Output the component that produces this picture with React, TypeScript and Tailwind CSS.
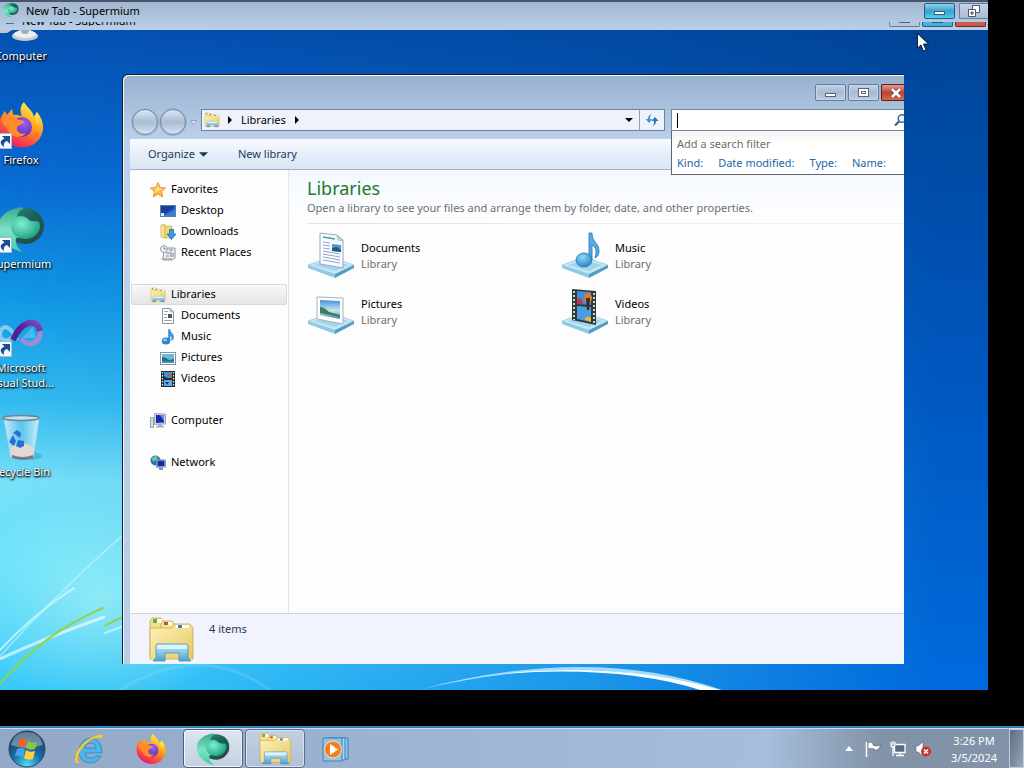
import type { ReactNode } from 'react';

interface IconProps {
  className?: string;
}

function Wallpaper() {
  return (
    <svg className="absolute inset-0 w-full h-full" viewBox="0 0 988 690" preserveAspectRatio="none" aria-hidden="true">
      <defs>
        <linearGradient id="wpLeft" x1="0" y1="0" x2="0" y2="1">
          <stop offset="0.04" stopColor="#0450b2" />
          <stop offset="0.26" stopColor="#086bd2" />
          <stop offset="0.43" stopColor="#1197e4" />
          <stop offset="0.58" stopColor="#32bbef" />
          <stop offset="0.7" stopColor="#7ae1f8" />
          <stop offset="0.82" stopColor="#62e0fb" />
          <stop offset="1" stopColor="#37c8f9" />
        </linearGradient>
        <linearGradient id="wpRight" x1="0" y1="0" x2="0" y2="1">
          <stop offset="0.04" stopColor="#004496" />
          <stop offset="0.5" stopColor="#0055bb" />
          <stop offset="1" stopColor="#006add" />
        </linearGradient>
        <linearGradient id="wpFade" x1="0" y1="0" x2="1" y2="0">
          <stop offset="0" stopColor="#fff" />
          <stop offset="0.15" stopColor="#eee" />
          <stop offset="0.6" stopColor="#777" />
          <stop offset="0.95" stopColor="#000" />
        </linearGradient>
        <mask id="wpMask">
          <rect width="988" height="690" fill="url(#wpFade)" />
        </mask>
        <radialGradient id="wpGlow">
          <stop offset="0" stopColor="#c9fff4" stopOpacity="0.5" />
          <stop offset="1" stopColor="#c9fff4" stopOpacity="0" />
        </radialGradient>
      </defs>
      <rect width="988" height="690" fill="url(#wpRight)" />
      <rect width="988" height="690" fill="url(#wpLeft)" mask="url(#wpMask)" />
      <ellipse cx="100" cy="600" rx="140" ry="110" fill="url(#wpGlow)" />
      <g fill="none" strokeLinecap="round">
        <path d="M0 650 Q36 612 74 588" stroke="#d9fbff" strokeWidth="2" opacity="0.75" />
        <path d="M0 656 Q60 590 124 534" stroke="#c8f6ff" strokeWidth="2" opacity="0.5" />
        <path d="M0 659 Q40 640 104 617" stroke="#fff" strokeWidth="3" opacity="0.6" />
        <path d="M0 684 Q42 634 103 608" stroke="#8fd44a" strokeWidth="2" />
        <path d="M105 626 Q112 621 124 617" stroke="#8fd44a" strokeWidth="2" />
        <path d="M105 633 L124 626" stroke="#e6ffff" strokeWidth="2" opacity="0.6" />
        <path d="M120 690 Q200 640 270 690" stroke="#8fe0ff" strokeWidth="3" opacity="0.25" />
      </g>
      <path d="M418 690 Q590 644 722 690 L704 690 Q590 650 418 690Z" fill="#9fdcff" />
      <path d="M500 674 Q620 661 720 690 L700 690 Q620 665 500 674Z" fill="#fff" />
    </svg>
  );
}

function SupermiumIcon({ className }: IconProps) {
  return (
    <svg className={className} viewBox="0 0 48 48" aria-hidden="true">
      <defs>
        <radialGradient id="smBall" cx="0.35" cy="0.35" r="0.75">
          <stop offset="0" stopColor="#7defcf" />
          <stop offset="0.7" stopColor="#34b596" />
          <stop offset="1" stopColor="#1c8f79" />
        </radialGradient>
        <linearGradient id="smRim" x1="0" y1="0" x2="1" y2="1">
          <stop offset="0" stopColor="#2a8f77" />
          <stop offset="0.5" stopColor="#1c5f56" />
          <stop offset="1" stopColor="#26423f" />
        </linearGradient>
        <linearGradient id="smTail" x1="0" y1="0" x2="0" y2="1">
          <stop offset="0" stopColor="#3ba98c" />
          <stop offset="0.5" stopColor="#7be3c4" />
          <stop offset="1" stopColor="#45c9a6" />
        </linearGradient>
      </defs>
      <ellipse cx="28" cy="21" rx="19" ry="18" fill="url(#smRim)" />
      <path d="M17 4 C6 7 1 15 1 23 C2 35 12 44 26 47 C20 43 18 38 19 33 L24 32 L20 12 C20 8 23 5 27 3 C23 2 20 3 17 4Z" fill="url(#smTail)" />
      <path d="M15 18 C17 10 26 9 31 14 C35 18 39 15 42 17 C46 25 38 34 29 34 C20 34 12 28 15 18Z" fill="url(#smBall)" />
    </svg>
  );
}

function FirefoxIcon({ className }: IconProps) {
  return (
    <svg className={className} viewBox="0 0 48 48" aria-hidden="true">
      <defs>
        <linearGradient id="ffBody" x1="0.8" y1="0.1" x2="0.3" y2="1">
          <stop offset="0" stopColor="#fff04a" />
          <stop offset="0.35" stopColor="#ffa91f" />
          <stop offset="0.65" stopColor="#ff5a36" />
          <stop offset="1" stopColor="#e8176b" />
        </linearGradient>
        <radialGradient id="ffGlobe" cx="0.6" cy="0.3" r="0.8">
          <stop offset="0" stopColor="#a05cf2" />
          <stop offset="1" stopColor="#4b2fb0" />
        </radialGradient>
      </defs>
      <path d="M27 1 C28 5 36 10 37 16 L40 11 C46 18 48 27 44 35 C39 46 24 50 13 43 C1 36 0 22 5 14 L8 10 L10 14 L15 8 L16 14 C20 13 23 15 25 15 C22 9 24 4 27 1Z" fill="url(#ffBody)" />
      <circle cx="25" cy="26" r="10" fill="url(#ffGlobe)" />
      <path d="M5 17 C10 14 16 15 19 18 L27 20 C26 24 21 24 20 26 C19 31 24 34 29 32 C25 38 14 37 11 29 C9 25 5 25 5 17Z" fill="#ff8b2a" />
      <path d="M27 1 C28 7 39 12 40 24 C42 19 41 15 40 11 L37 16 C36 10 30 7 27 1Z" fill="#ffe14a" />
    </svg>
  );
}

function VisualStudioIcon({ className }: IconProps) {
  return (
    <svg className={className} viewBox="0 0 48 48" aria-hidden="true">
      <defs>
        <linearGradient id="vsRing" x1="0" y1="1" x2="1" y2="0">
          <stop offset="0" stopColor="#3f2a8c" />
          <stop offset="0.5" stopColor="#5b1c9b" />
          <stop offset="1" stopColor="#7a4fbd" />
        </linearGradient>
      </defs>
      <path d="M20 31 C12 14 4 16 3 25 C3 32 10 33 16 28" fill="none" stroke="#8bc9f0" strokeWidth="4" />
      <path d="M24 30 Q34 39 41 31 Q44 27 43 22" fill="none" stroke="#9d8ad9" strokeWidth="5" />
      <path d="M16 31 C24 12 40 8 43 22" fill="none" stroke="url(#vsRing)" strokeWidth="6" />
      <path d="M25 29 L36 18 L39 29Z" fill="#6fd2ee" opacity="0.5" />
    </svg>
  );
}

function RecycleBinIcon({ className }: IconProps) {
  return (
    <svg className={className} viewBox="0 0 48 48" aria-hidden="true">
      <defs>
        <linearGradient id="rbGlass" x1="0" y1="0" x2="1" y2="0">
          <stop offset="0" stopColor="#dff6ff" stopOpacity="0.85" />
          <stop offset="0.5" stopColor="#6cc4ea" stopOpacity="0.6" />
          <stop offset="1" stopColor="#e7faff" stopOpacity="0.85" />
        </linearGradient>
      </defs>
      <ellipse cx="32" cy="43" rx="13" ry="4" fill="#1b7ea3" opacity="0.3" />
      <path d="M7 5 L42 5 L36 44 Q26 49 14 44Z" fill="url(#rbGlass)" stroke="#b6dce9" />
      <path d="M13 36 Q19 29 25 32 Q30 28 37 36 L36 44 Q26 49 14 44Z" fill="#e1d9d4" />
      <path d="M15 42 Q26 46 36 42 L36 45 Q26 49 15 45Z" fill="#717a82" />
      <ellipse cx="24" cy="5" rx="18" ry="2.5" fill="#bfe3f0" stroke="#6e8593" strokeWidth="1.500" />
      <path d="M16 20 L20 17 L24 20 L23 25 L19 22Z M12 29 L16 22 L19 28 L17 33Z M19 33 L21 27 L27 28 L27 33 L23 35Z" fill="#2472d4" />
    </svg>
  );
}

function ComputerDesktopIcon({ className }: IconProps) {
  return (
    <svg className={className} viewBox="0 0 48 48" aria-hidden="true">
      <path d="M5 4 H44 V31 H5Z" fill="#2c5fb0" stroke="#c5cbd2" strokeWidth="2" />
      <path d="M22 30 H34 V37 H22Z" fill="#a9afb6" />
      <ellipse cx="28" cy="39" rx="13" ry="5" fill="#c9cdd1" />
      <ellipse cx="28" cy="37" rx="11" ry="4" fill="#eeeff0" />
      <ellipse cx="28" cy="34" rx="4" ry="3" fill="#a7abb0" />
      <path d="M3 32 L15 33 L10 36 L2 36Z" fill="#c3c7cc" />
    </svg>
  );
}

function LibrariesIcon({ className }: IconProps) {
  return (
    <svg className={className} viewBox="0 0 48 48" aria-hidden="true">
      <defs>
        <linearGradient id="libFolder" x1="0" y1="0" x2="1" y2="1">
          <stop offset="0" stopColor="#fdf3b8" />
          <stop offset="1" stopColor="#e6c865" />
        </linearGradient>
        <linearGradient id="libStand" x1="0" y1="0" x2="0" y2="1">
          <stop offset="0" stopColor="#c3ecfb" />
          <stop offset="1" stopColor="#4b9fd4" />
        </linearGradient>
      </defs>
      <path d="M3 5 L5 2 H14 L16 6 H26 V40 H3Z" fill="#f6e08a" stroke="#c9a654" strokeWidth="0.8" />
      <rect x="6" y="3" width="9" height="4" fill="#fffef4" />
      <rect x="6" y="3" width="4" height="4" fill="#5fae45" />
      <path d="M14 8 L16 5 H25 L28 9 H38 V42 H14Z" fill="#f7e596" stroke="#c9a654" strokeWidth="0.8" />
      <rect x="17" y="6" width="8" height="3" fill="#fffef4" />
      <rect x="17" y="6" width="4" height="3" fill="#c9562d" />
      <path d="M3 12 H25 L27 8 H43 L46 12 V43 H3Z" fill="url(#libFolder)" stroke="#c9a654" strokeWidth="0.8" />
      <rect x="29" y="9" width="13" height="3" fill="#fff" />
      <rect x="31" y="9" width="4" height="3" fill="#3f7fc4" />
      <path d="M10 28 H39 Q41 28 41 31 V42 L44 45 H32 V37 H18 V45 H6 L9 42 V31 Q9 28 10 28Z" fill="url(#libStand)" stroke="#4c93bd" strokeWidth="0.8" />
      <path d="M10 29 H40 V33 H10Z" fill="#e6f9ff" opacity="0.8" />
    </svg>
  );
}

function Pedestal() {
  return (
    <g>
      <path d="M1 33 L24 25 L47 33 L28 43 Z" fill="#c5e6f5" stroke="#8cc0dc" strokeWidth="0.600" />
      <path d="M1 33 L28 42 L28 46 L1 36Z" fill="#8fc9e6" />
      <path d="M28 42 L47 33 L47 36 L28 46Z" fill="#4f9fc4" />
      <path d="M7 33 L24 28 L41 33 L28 39Z" fill="#a2d4ec" />
    </g>
  );
}

function DocumentsLibraryIcon({ className }: IconProps) {
  return (
    <svg className={className} viewBox="0 0 48 48" aria-hidden="true">
      <Pedestal />
      <path d="M13 1 L30 3 L36 8 V36 L13 32Z" fill="#f7faff" stroke="#9aa5bb" />
      <path d="M30 3 L31 8 L36 9Z" fill="#bfe0dc" stroke="#86a9ab" strokeWidth="0.600" />
      <path d="M16 5 L28 7" stroke="#4fa08f" strokeWidth="1.500" />
      <path d="M16 10 L23 11 M16 13 L23 14 M16 16 L23 17 M16 19 L33 22 M16 22 L33 25 M16 25 L33 28 M16 28 L33 31" stroke="#9aa3cf" strokeWidth="1" />
      <path d="M25 12 L34 13 V20 L25 19Z" fill="#4d9ac7" />
      <path d="M25 16 L30 15 L34 18 V20 L25 19Z" fill="#23587c" />
    </svg>
  );
}

function MusicLibraryIcon({ className }: IconProps) {
  return (
    <svg className={className} viewBox="0 0 48 48" aria-hidden="true">
      <defs>
        <radialGradient id="noteBall" cx="0.4" cy="0.3" r="0.8">
          <stop offset="0" stopColor="#8fd6fb" />
          <stop offset="1" stopColor="#1f7cc4" />
        </radialGradient>
      </defs>
      <Pedestal />
      <path d="M28 1 L31 1 C31 10 38 11 38 19 C38 23 36 25 34 26 C36 19 35 15 31 13 V28 H28Z" fill="#54aee6" stroke="#2674ac" strokeWidth="0.800" />
      <ellipse cx="23" cy="28" rx="8" ry="7" fill="url(#noteBall)" stroke="#2674ac" strokeWidth="0.800" />
    </svg>
  );
}

function PicturesLibraryIcon({ className }: IconProps) {
  return (
    <svg className={className} viewBox="0 0 48 48" aria-hidden="true">
      <defs>
        <linearGradient id="picSky" x1="0" y1="0" x2="0" y2="1">
          <stop offset="0" stopColor="#4690d8" />
          <stop offset="0.55" stopColor="#c6e6f3" />
          <stop offset="1" stopColor="#3d8aa5" />
        </linearGradient>
      </defs>
      <Pedestal />
      <path d="M10 9 L36 10 V36 L10 31Z" fill="#fff" stroke="#a6b2c0" />
      <path d="M13 12 L33 13 V31 L13 27Z" fill="url(#picSky)" />
      <path d="M13 19 Q17 19 22 24 L33 27 V29 L13 25Z" fill="#3e7d5b" />
    </svg>
  );
}

function VideosLibraryIcon({ className }: IconProps) {
  return (
    <svg className={className} viewBox="0 0 48 48" aria-hidden="true">
      <Pedestal />
      <path d="M11 1 L35 3 V37 L11 32Z" fill="#33363c" />
      <path d="M16 3 L30 4 V17 L16 16Z" fill="#3d8fdc" />
      <path d="M16 18 L30 19 V34 L16 31Z" fill="#4a9be2" />
      <path d="M13 3 V32" stroke="#b9e0c7" strokeWidth="2" strokeDasharray="2 2" />
      <path d="M33 5 V35" stroke="#b9e0c7" strokeWidth="2" strokeDasharray="2 2" />
      <path d="M16 11 L20 10 L22 16 L16 16Z" fill="#c8334a" />
      <ellipse cx="27" cy="10" rx="4" ry="5" fill="#d97f2b" />
      <path d="M25 10 H29 L28 22 H26Z" fill="#3a2a20" />
      <path d="M24 30 Q28 27 30 30 V34 L24 32Z" fill="#f0b829" />
    </svg>
  );
}

function StarIcon() {
  return (
    <svg className="size-4" viewBox="0 0 16 16" aria-hidden="true">
      <path d="M8 0.5 L10.2 5.5 L15.6 6 L11.5 9.6 L12.8 15 L8 12 L3.2 15 L4.5 9.6 L0.4 6 L5.8 5.5Z" fill="#fdb93c" stroke="#d9882b" strokeWidth="0.8" />
      <path d="M8 2.5 L9.4 6.4 L13 6.8 L8.500 9 L4 11 L6 8 L3 6.8 L6.600 6.400Z" fill="#ffe08a" />
    </svg>
  );
}

function DesktopSmallIcon() {
  return (
    <svg className="size-4" viewBox="0 0 16 16" aria-hidden="true">
      <rect x="0.5" y="2.5" width="15" height="11" fill="#1f52b8" stroke="#5a7fb5" />
      <path d="M1 12 Q8 9 15 3 V3 H1Z" fill="#163f97" />
      <path d="M4 12 Q10 10 15 6 V13 H4Z" fill="#4a8fe0" opacity="0.7" />
      <rect x="1" y="10" width="3" height="3" fill="#dfe9f5" />
    </svg>
  );
}

function DownloadsSmallIcon() {
  return (
    <svg className="size-4" viewBox="0 0 16 16" aria-hidden="true">
      <path d="M1 1 L5 0.5 V14 L1 13Z" fill="#f6e49a" stroke="#cfae52" strokeWidth="0.8" />
      <path d="M5 2 H12 V14 H5Z" fill="#f1d777" stroke="#cfae52" strokeWidth="0.8" />
      <path d="M9.5 5.5 H13.5 V10 H16 L11.5 15.5 L7 10 H9.5Z" fill="#3a9be0" stroke="#1d6ca8" strokeWidth="0.8" />
    </svg>
  );
}

function RecentSmallIcon() {
  return (
    <svg className="size-4" viewBox="0 0 16 16" aria-hidden="true">
      <path d="M4 3 H15 V13 L12 15 H3Z" fill="#eef1f4" stroke="#8e979f" />
      <circle cx="4" cy="4" r="3.4" fill="#f4f6f8" stroke="#8e979f" />
      <path d="M4 2 V4 H6 M9 5 H13 M6 8 H12 M6 11 H9 M11 9 V12 M13 8 V12" stroke="#75808a" fill="none" />
      <path d="M1 13 H12 V15 H2Z" fill="#aeb6bd" />
    </svg>
  );
}

function DocumentSmallIcon() {
  return (
    <svg className="size-4" viewBox="0 0 16 16" aria-hidden="true">
      <path d="M2.5 0.5 H10 L13.5 4 V15.5 H2.5Z" fill="#fff" stroke="#8b949d" />
      <path d="M10 0.5 V4 H13.5Z" fill="#d5dbe0" stroke="#8b949d" strokeWidth="0.6" />
      <path d="M4 3.5 H8 M4 6.5 H7 M4 9.5 H7 M4 12.5 H12" stroke="#98a2b5" />
      <rect x="8" y="6" width="4" height="4" fill="#4a5862" />
    </svg>
  );
}

function MusicSmallIcon() {
  return (
    <svg className="size-4" viewBox="0 0 16 16" aria-hidden="true">
      <path d="M8.500 0.500 H10 C10 4 14 4.500 13.500 8.500 C13.400 10 12.500 11 11.500 11.500 C12.500 8 11.500 7 10 6.500 V12 H8.500Z" fill="#3d9ade" stroke="#2470ab" strokeWidth="0.500" />
      <ellipse cx="6" cy="12" rx="4.200" ry="3.500" fill="#2f85cf" />
      <ellipse cx="5.200" cy="11" rx="2" ry="1.300" fill="#8ccbf5" />
    </svg>
  );
}

function PictureSmallIcon() {
  return (
    <svg className="size-4" viewBox="0 0 16 16" aria-hidden="true">
      <rect x="0.500" y="2.500" width="15" height="12" fill="#fff" stroke="#8593a0" />
      <rect x="2" y="4" width="12" height="9" fill="#69b9e3" />
      <path d="M2 7 Q6 7 9 10 L14 9 V13 H2Z" fill="#237079" />
      <path d="M2 11 H14 V13 H2Z" fill="#3c93b4" />
    </svg>
  );
}

function VideoSmallIcon() {
  return (
    <svg className="size-4" viewBox="0 0 16 16" aria-hidden="true">
      <rect x="1" y="0" width="14" height="16" fill="#262b33" />
      <rect x="4" y="1" width="8" height="6" fill="#3f95dc" />
      <rect x="4" y="9" width="8" height="6" fill="#58aee8" />
      <path d="M2.500 1 V16 M13.500 1 V16" stroke="#dfe7ee" strokeWidth="1.200" strokeDasharray="1.500 1.500" />
      <path d="M8 3 H12 V6 H9Z" fill="#d0503a" />
      <path d="M4 5 L8 7 H4Z M5 11 H9 L7 14Z" fill="#1d3f6b" />
    </svg>
  );
}

function ComputerSmallIcon() {
  return (
    <svg className="size-4" viewBox="0 0 16 16" aria-hidden="true">
      <path d="M0.500 4.500 H3.500 V14.500 H0.500Z" fill="#d6dade" stroke="#9aa2aa" />
      <path d="M4.500 0.500 L15.500 1 V11 L4.500 11.500Z" fill="#ccd3dc" stroke="#8f99a5" strokeWidth="0.800" />
      <path d="M6 2 L14 2.200 V9.500 L6 10Z" fill="#1428b8" />
      <path d="M10 2 L14 2.200 V8Z" fill="#6e8df0" />
      <path d="M8 11.500 H12 V13 H14 V14.500 H6 V13 H8Z" fill="#a7afb8" />
    </svg>
  );
}

function NetworkSmallIcon() {
  return (
    <svg className="size-4" viewBox="0 0 16 16" aria-hidden="true">
      <circle cx="5.500" cy="5.500" r="5" fill="#2475b8" />
      <path d="M2 3 Q5 0 8 2 L6 5 L3 7Z" fill="#6fd07a" />
      <path d="M6.500 4.500 L15.500 5 V12 L6.500 12.500Z" fill="#c6cfd9" stroke="#7d8996" strokeWidth="0.800" />
      <path d="M7.500 5.500 L14.500 5.700 V11 L7.500 11.500Z" fill="#1428b8" />
      <path d="M9 12.500 H13 V15 H9Z" fill="#8e98a4" />
    </svg>
  );
}

const desktopIcons = [
  { label: 'Computer', icon: <ComputerDesktopIcon className="size-12" />, shortcut: false },
  { label: 'Firefox', icon: <FirefoxIcon className="size-12" />, shortcut: true },
  { label: 'Supermium', icon: <SupermiumIcon className="size-12" />, shortcut: true },
  { label: 'Microsoft Visual Stud...', icon: <VisualStudioIcon className="size-12" />, shortcut: true },
  { label: 'Recycle Bin', icon: <RecycleBinIcon className="size-12" />, shortcut: false },
];

const treeGroups = [
  {
    label: 'Favorites',
    icon: <StarIcon />,
    selected: false,
    children: [
      { label: 'Desktop', icon: <DesktopSmallIcon /> },
      { label: 'Downloads', icon: <DownloadsSmallIcon /> },
      { label: 'Recent Places', icon: <RecentSmallIcon /> },
    ],
  },
  {
    label: 'Libraries',
    icon: <LibrariesIcon className="size-4" />,
    selected: true,
    children: [
      { label: 'Documents', icon: <DocumentSmallIcon /> },
      { label: 'Music', icon: <MusicSmallIcon /> },
      { label: 'Pictures', icon: <PictureSmallIcon /> },
      { label: 'Videos', icon: <VideoSmallIcon /> },
    ],
  },
  { label: 'Computer', icon: <ComputerSmallIcon />, selected: false, children: [] },
  { label: 'Network', icon: <NetworkSmallIcon />, selected: false, children: [] },
];

const libraries = [
  { name: 'Documents', icon: <DocumentsLibraryIcon className="size-12" /> },
  { name: 'Music', icon: <MusicLibraryIcon className="size-12" /> },
  { name: 'Pictures', icon: <PicturesLibraryIcon className="size-12" /> },
  { name: 'Videos', icon: <VideosLibraryIcon className="size-12" /> },
];

const searchFilters = ['Kind:', 'Date modified:', 'Type:', 'Name:'];

function ShortcutArrow() {
  return (
    <svg className="size-4" viewBox="0 0 16 16" aria-hidden="true">
      <rect x="0.5" y="0.5" width="15" height="15" fill="#f2f7fc" stroke="#a9bccf" />
      <path d="M6 3 H14 V11 L11 8 Q7 9 8 14 Q1 9 8.500 5.500Z" fill="#1e4c94" />
    </svg>
  );
}

function DesktopIcons() {
  return (
    <div className="absolute -left-4 -top-[3px] w-[74px] flex flex-col">
      {desktopIcons.map((item) => (
        <button key={item.label} className="relative h-[104px] flex flex-col items-center gap-[3px] text-white">
          {item.icon}
          {item.shortcut && (
            <span className="absolute left-3 top-8">
              <ShortcutArrow />
            </span>
          )}
          <span className="text-[11px] leading-[15px] [text-shadow:1px_1px_2px_#000,0_1px_2px_#000]">
            {item.label}
          </span>
        </button>
      ))}
    </div>
  );
}

function TitleBar() {
  return (
    <header className="relative z-10 h-[30px] overflow-hidden border-t-2 border-[#48566c] bg-linear-to-b from-[#a3b6d0] to-[#b9cfe8] text-black">
      <div className="flex justify-between h-5">
        <div className="flex items-start gap-[7px] pl-[3px] text-[11px] leading-[18px]">
          <SupermiumIcon className="size-4" />
          <h1>New Tab - Supermium</h1>
        </div>
        <div className="flex gap-1 pt-px">
          <button aria-label="Minimize" className="w-[31px] h-4 rounded-xs border border-[#2a5b85] bg-linear-to-b from-[#8fd3ee] via-[#3a9fd0] to-[#4fd0f0] flex items-end justify-center pb-[3px]">
            <span className="w-[11px] h-1 border border-[#35617f] bg-white" />
          </button>
          <button aria-label="Restore" className="w-[29px] h-4 rounded-l-xs border border-r-0 border-[#6b7c96] bg-linear-to-b from-[#c5d2e4] to-[#a9bbd4] flex items-center justify-center">
            <svg className="size-3" viewBox="0 0 12 12" aria-hidden="true">
              <path d="M4.500 0.500 H11.500 V7.500 H4.500Z" fill="#fff" stroke="#4d5870" />
              <path d="M0.500 4.500 H7.500 V11.500 H0.500Z" fill="#fff" stroke="#4d5870" />
              <path d="M3 7 H5 V9 H3Z" fill="#8896ad" stroke="#4d5870" />
            </svg>
          </button>
        </div>
      </div>
      {/* trail left behind by the moving window */}
      <div className="flex items-start justify-between h-[5px]" aria-hidden="true">
        <div className="flex items-start gap-2 pl-[6px]">
          <span className="mt-px w-2 h-px bg-[#50766f]" />
          <span className="h-1 flex items-end overflow-hidden text-[11px] leading-[10px]">
            New Tab - Supermium
          </span>
        </div>
        <div className="flex gap-[2px] pr-[2px]">
          <span className="w-[31px] h-[5px] rounded-b-xs border border-t-0 border-[#6b7c96] bg-[#b4c6dd] flex justify-center">
            <span className="w-[11px] h-px bg-[#56647c]" />
          </span>
          <span className="w-[31px] h-[5px] rounded-b-xs border border-t-0 border-[#2a5b85] bg-[#3fb4dc] flex justify-center">
            <span className="w-[11px] h-px bg-[#2a5b85]" />
          </span>
          <span className="w-[31px] h-[5px] rounded-b-xs border border-t-0 border-[#6a2a2a] bg-[#cc5a4a]" />
        </div>
      </div>
    </header>
  );
}

function WindowControls() {
  return (
    <div className="flex justify-end gap-[2px] pt-2">
      <button aria-label="Minimize" className="w-[31px] h-[17px] rounded-xs border border-[#6b7c96] bg-linear-to-b from-[#c3d1e4] via-[#a7bbd6] to-[#bccde2] shadow-[inset_0_0_0_1px_#c9d6e7] flex items-end justify-center pb-[3px]">
        <span className="w-[11px] h-1 border border-[#56647c] bg-white" />
      </button>
      <button aria-label="Maximize" className="w-[31px] h-[17px] rounded-xs border border-[#6b7c96] bg-linear-to-b from-[#c3d1e4] via-[#a7bbd6] to-[#bccde2] shadow-[inset_0_0_0_1px_#c9d6e7] flex items-center justify-center">
        <span className="w-[11px] h-[9px] border border-[#56647c] bg-white flex items-center justify-center">
          <span className="w-[5px] h-[3px] border border-[#56647c]" />
        </span>
      </button>
      <button aria-label="Close" className="w-[23px] h-[17px] rounded-l-xs border border-r-0 border-[#5e1f22] bg-linear-to-b from-[#e39a8c] via-[#c2402c] to-[#d86a4d] flex items-center justify-end pr-[2px]">
        <svg className="w-3 h-[10px]" viewBox="0 0 12 10" aria-hidden="true">
          <path d="M2 1 L10 9 M10 1 L2 9" stroke="#5b4a55" strokeWidth="4" />
          <path d="M2 1 L10 9 M10 1 L2 9" stroke="#fff" strokeWidth="2.500" />
        </svg>
      </button>
    </div>
  );
}

function BackForward() {
  return (
    <div className="flex items-start w-[71px] pl-[2px]">
      <button aria-label="Back" className="size-[26px] rounded-full border border-[#71839c] bg-linear-to-b from-[#dde7f2] via-[#a9bdd6] to-[#d5e3f3] shadow-[0_0_0_1px_#a4b6cd]" />
      <button aria-label="Forward" className="ml-[2px] size-[26px] rounded-full border border-[#71839c] bg-linear-to-b from-[#dde7f2] via-[#a9bdd6] to-[#d5e3f3] shadow-[0_0_0_1px_#a4b6cd]" />
      <button aria-label="Recent pages" className="ml-1 mt-[11px]">
        <svg className="w-[7px] h-[6px]" viewBox="0 0 7 6" aria-hidden="true">
          <path d="M0.500 0.500 H6.500 L3.500 5Z" fill="#dbe8f6" stroke="#8ea5c2" />
        </svg>
      </button>
    </div>
  );
}

function Triangle({ className }: IconProps) {
  return (
    <svg className={className} viewBox="0 0 8 8" aria-hidden="true">
      <path d="M2 0 L6 4 L2 8Z" fill="currentColor" />
    </svg>
  );
}

function AddressBar() {
  return (
    <div className="flex flex-1 h-[22px] border border-[#6f839e] bg-[#eef3fb]">
      <div className="flex flex-1 items-center pl-[2px]">
        <LibrariesIcon className="size-4" />
        <Triangle className="ml-[6px] size-2" />
        <button className="ml-[7px] text-[11px] leading-5">Libraries</button>
        <Triangle className="ml-[7px] size-2" />
      </div>
      <button aria-label="Previous locations" className="w-5 flex items-center justify-center">
        <Triangle className="size-2 rotate-90" />
      </button>
      <button aria-label="Refresh" className="w-[25px] border-l border-[#8fa0b8] flex items-center justify-center">
        <svg className="size-[14px]" viewBox="0 0 14 14" aria-hidden="true">
          <path d="M6.500 1 Q3 2 3 6 L0.500 6 L4 10 L7.500 6 H5 Q4.500 3 6.500 1Z" fill="#4d93cf" />
          <path d="M7.500 13 Q11 12 11 8 L13.500 8 L10 4 L6.500 8 H9 Q9.500 11 7.500 13Z" fill="#2f73b5" />
        </svg>
      </button>
    </div>
  );
}

function SearchBox() {
  return (
    <div className="relative w-[233px]">
      <div className="flex items-center h-[22px] pl-[5px] border border-r-0 border-[#6f839e] bg-white">
        <label htmlFor="library-search" className="sr-only">
          Search Libraries
        </label>
        <span className="w-px h-[15px] bg-black" />
        <input id="library-search" type="text" className="flex-1 min-w-0 h-5 text-[11px] outline-none" />
        <svg className="w-[10px] h-3" viewBox="0 0 10 12" aria-hidden="true">
          <circle cx="8" cy="4.500" r="3.800" fill="#e9f3fb" stroke="#4a7396" strokeWidth="1.600" />
          <path d="M5 7.500 L1 11.500" stroke="#2f5878" strokeWidth="2" />
        </svg>
      </div>
      <div className="absolute z-10 left-0 right-0 top-[22px] h-11 border-l border-b border-[#5f666f] bg-linear-to-b from-[#f3f3f3] to-white to-30% pl-[5px] pt-1 text-[11px]">
        <p className="leading-[18px] text-[#6d6d6d]">Add a search filter</p>
        <div className="flex gap-[15px] leading-5 text-[#1b66a8]">
          {searchFilters.map((filter) => (
            <button key={filter}>{filter}</button>
          ))}
        </div>
      </div>
    </div>
  );
}

interface TreeRowProps {
  label: string;
  icon: ReactNode;
  nested?: boolean;
  selected?: boolean;
}

function TreeRow({ label, icon, nested, selected }: TreeRowProps) {
  return (
    <button
      className={`flex items-center gap-[5px] h-[21px] rounded-xs border text-left ${nested ? 'pl-7' : 'pl-[18px]'} ${
        selected ? 'border-[#d9d9d9] bg-linear-to-b from-[#f8f8f8] to-[#e5e5e5]' : 'border-transparent'
      }`}
    >
      {icon}
      <span>{label}</span>
    </button>
  );
}

function NavigationPane() {
  return (
    <nav className="w-[159px] shrink-0 flex flex-col gap-[21px] border-r border-[#dfe8f2] px-px pt-[9px] text-[11px]">
      {treeGroups.map((group) => (
        <div key={group.label} className="flex flex-col">
          <TreeRow label={group.label} icon={group.icon} selected={group.selected} />
          {group.children.map((child) => (
            <TreeRow key={child.label} label={child.label} icon={child.icon} nested />
          ))}
        </div>
      ))}
    </nav>
  );
}

function LibraryPane() {
  return (
    <main className="flex-1 min-w-0 pl-[18px] pt-2 bg-linear-to-b from-[#f3f8fe] to-[#fdfdfd] to-10%">
      <h2 className="text-[18px] leading-5 text-[#1d7a2b]">Libraries</h2>
      <p className="mt-[2px] text-[11px] leading-[15px] text-[#6a707a]">
        Open a library to see your files and arrange them by folder, date, and other properties.
      </p>
      <div className="my-2 h-px bg-linear-to-r from-[#dfe5ec] to-[#f0f3f6]" />
      <div className="grid grid-cols-[repeat(auto-fill,254px)] gap-y-2">
        {libraries.map((library) => (
          <button key={library.name} className="flex items-center gap-[6px] h-12 text-left text-[11px] leading-4">
            {library.icon}
            <span className="flex flex-col">
              <span>{library.name}</span>
              <span className="text-[#6d6d6d]">Library</span>
            </span>
          </button>
        ))}
      </div>
    </main>
  );
}

function ExplorerWindow() {
  return (
    <section
      aria-label="Libraries"
      className="absolute left-[122px] right-[84px] top-[74px] bottom-[26px] flex flex-col overflow-hidden rounded-tl-md border-l border-t border-[#14202e] bg-linear-to-b from-[#bdd2ea] to-[#b9cde6] text-black"
    >
      <div className="flex flex-col flex-1 min-h-0 rounded-tl-md border-l border-t border-[#eef6fd]">
        <div className="rounded-tl-md bg-linear-to-b from-[#99b2d0] to-[#bbd1ea]">
          <WindowControls />
          <div className="flex items-start pl-[6px] pt-2 pb-1">
            <BackForward />
            <div className="flex flex-1 gap-[6px]">
              <AddressBar />
              <SearchBox />
            </div>
          </div>
        </div>
        <div className="flex flex-col flex-1 min-h-0 ml-[6px] bg-[#fdfdfd]">
          <div className="flex items-center h-[31px] gap-[30px] pl-[18px] border-b border-[#a3b3ca] bg-linear-to-b from-[#fafcff] via-[#e5eef9] via-50% to-[#dae6f4] text-[11px] text-[#1e395b]">
            <button className="flex items-center gap-1">
              Organize
              <Triangle className="size-[9px] rotate-90" />
            </button>
            <button>New library</button>
          </div>
          <div className="flex flex-1 min-h-0">
            <NavigationPane />
            <LibraryPane />
          </div>
          <footer className="flex h-[51px] shrink-0 gap-[14px] border-t border-[#ccd5e2] bg-[#f1f4fc] pl-[17px] pt-[2px] text-[11px] text-[#1e395b]">
            <LibrariesIcon className="size-12" />
            <p className="pt-1 leading-[18px]">4 items</p>
          </footer>
        </div>
      </div>
    </section>
  );
}

function StartOrb() {
  return (
    <svg className="size-10" viewBox="0 0 40 40" aria-hidden="true">
      <defs>
        <radialGradient id="orb" cx="0.5" cy="0.95" r="0.9">
          <stop offset="0" stopColor="#4fe0f5" />
          <stop offset="0.45" stopColor="#1c6ea8" />
          <stop offset="1" stopColor="#14395f" />
        </radialGradient>
      </defs>
      <circle cx="20" cy="20" r="18" fill="url(#orb)" stroke="#2a4866" />
      <path d="M4 16 Q20 22 36 16 Q33 3 20 3 Q7 3 4 16Z" fill="#fff" opacity="0.350" />
      <path d="M13 10 Q17 8 20 11 L18 19 Q15 16 10 18Z" fill="#f2622e" />
      <path d="M21 12 Q25 15 30 13 L28 20 Q23 22 19 19Z" fill="#8cc63f" />
      <path d="M10 20 Q15 18 18 20 L16 29 Q13 26 8 27Z" fill="#42a5e8" />
      <path d="M19 21 Q23 24 28 22 L26 30 Q21 32 17 29Z" fill="#ffd23c" />
    </svg>
  );
}

function InternetExplorerIcon() {
  return (
    <svg className="size-8" viewBox="0 0 32 32" aria-hidden="true">
      <path d="M29 20 H12 Q13 25 18 25 Q21 25 23 23 H28 Q25 30 17 30 Q6 29 6 18 Q7 6 18 5 Q29 6 29 20Z M12 15 H23 Q22 10 18 10 Q13 10 12 15Z" fill="#4db5ea" stroke="#2386be" strokeWidth="0.800" fillRule="evenodd" />
      <path d="M30 2 C24 0 8 8 3 21 C0 30 4 32 9 29 C5 30 3 28 6 21 C10 11 20 3 29 5Z" fill="#f6cf3c" stroke="#d9a624" strokeWidth="0.500" />
    </svg>
  );
}

function MediaPlayerIcon() {
  return (
    <svg className="size-8" viewBox="0 0 32 32" aria-hidden="true">
      <path d="M10 5 H28 V26 H10Z" fill="#8fc4e8" stroke="#3f82b8" />
      <path d="M6 5 H25 V27 H6Z" fill="#a9d4f0" stroke="#3f82b8" />
      <path d="M3 5 H22 V28 H3Z" fill="#8cc3e6" stroke="#3f82b8" />
      <circle cx="13" cy="16.500" r="8.500" fill="#f07f22" stroke="#fbe2cb" />
      <path d="M10 11 L18 16.500 L10 22Z" fill="#fff" />
    </svg>
  );
}

function Tray() {
  return (
    <div className="flex items-center h-full text-white">
      <div className="flex items-center gap-[9px] pr-5">
        <button aria-label="Show hidden icons" className="mr-[3px]">
          <svg className="w-2 h-[5px]" viewBox="0 0 8 5" aria-hidden="true">
            <path d="M4 0 L8 5 H0Z" fill="#fff" />
          </svg>
        </button>
        <button aria-label="Action Center">
          <svg className="size-4" viewBox="0 0 16 16" aria-hidden="true">
            <path d="M1.500 1 V16" stroke="#fff" strokeWidth="1.500" />
            <path d="M3 1.500 Q6 1 8 2 V4 Q11 6 15.500 4 Q14 10 9.500 9 V8 Q6 7 3 8Z" fill="#fff" stroke="#3b4757" strokeWidth="0.500" />
          </svg>
        </button>
        <button aria-label="Network">
          <svg className="size-4" viewBox="0 0 16 16" aria-hidden="true">
            <path d="M6 3.500 H15 V11.500 H4.500 V6" fill="#5c6c80" stroke="#fff" strokeWidth="1.300" />
            <path d="M1 1 V4 Q1 6 3 6 V15 M5 1 V4 Q5 6 3 6 M3 0 V4 M6 14.500 H14 M10 12 V14" fill="none" stroke="#fff" strokeWidth="1.300" />
          </svg>
        </button>
        <button aria-label="Volume muted">
          <svg className="size-4" viewBox="0 0 16 16" aria-hidden="true">
            <path d="M1 5 H3 L8 1 V15 L3 11 H1Z" fill="#fff" stroke="#4a5666" strokeWidth="0.500" />
            <circle cx="11" cy="10.500" r="5" fill="#d12f2f" />
            <path d="M9 8.500 L13 12.500 M13 8.500 L9 12.500" stroke="#fff" strokeWidth="1.500" />
          </svg>
        </button>
      </div>
      <button className="pr-3 text-center text-[11px] leading-[17px]">
        3:26 PM
        <br />
        3/5/2024
      </button>
      <button aria-label="Show desktop" className="w-[15px] h-full border border-[#c4cedb] bg-linear-to-br from-[#5f6d82] to-[#96a6bb]" />
    </div>
  );
}

function Taskbar() {
  return (
    <footer className="h-[42px] shrink-0 border-t-2 border-[#2b83bf]">
      <div className="flex items-center justify-between h-10 border-t border-[#cddcec] bg-linear-to-r from-[#93a8c7] via-[#a6bedb] via-75% to-[#8292a8] to-86%">
        <div className="flex items-center h-full">
          <button aria-label="Start" className="w-[54px] flex justify-center">
            <StartOrb />
          </button>
          <button aria-label="Internet Explorer" className="ml-1 w-[62px] flex justify-center">
            <InternetExplorerIcon />
          </button>
          <button aria-label="Firefox" className="w-[62px] flex justify-center">
            <FirefoxIcon className="size-8" />
          </button>
          <button aria-label="Supermium" className="ml-px w-[60px] h-full flex items-center justify-center rounded-sm border border-[#4d5d74] bg-linear-to-b from-[#dde5f0] to-[#c3d0e2] shadow-[inset_0_0_0_1px_#f3f7fb]">
            <SupermiumIcon className="size-[34px]" />
          </button>
          <button aria-label="Windows Explorer" className="ml-[2px] w-[60px] h-full flex items-center justify-center rounded-sm border border-[#5e6e86] bg-linear-to-b from-[#c2cfe1] to-[#b0c1d8] shadow-[inset_0_0_0_1px_#d8e2ee]">
            <LibrariesIcon className="size-[34px]" />
          </button>
          <button aria-label="Windows Media Player" className="w-[62px] flex justify-center">
            <MediaPlayerIcon />
          </button>
        </div>
        <Tray />
      </div>
    </footer>
  );
}

export default function App() {
  return (
    <div className="flex flex-col min-h-screen overflow-hidden bg-black font-['Noto_Sans','Open_Sans',sans-serif]">
      <div className="relative flex-1 mr-9 mb-9 overflow-hidden">
        <Wallpaper />
        <TitleBar />
        <DesktopIcons />
        <ExplorerWindow />
        <svg className="absolute right-[59px] top-[33px] z-20 w-3 h-[19px]" viewBox="0 0 12 19" aria-hidden="true">
          <path d="M0.500 0.500 V15 L4 12 L6.500 18 L9 17 L6.500 11 H11.500Z" fill="#fff" stroke="#000" strokeWidth="0.800" />
        </svg>
      </div>
      <Taskbar />
    </div>
  );
}
